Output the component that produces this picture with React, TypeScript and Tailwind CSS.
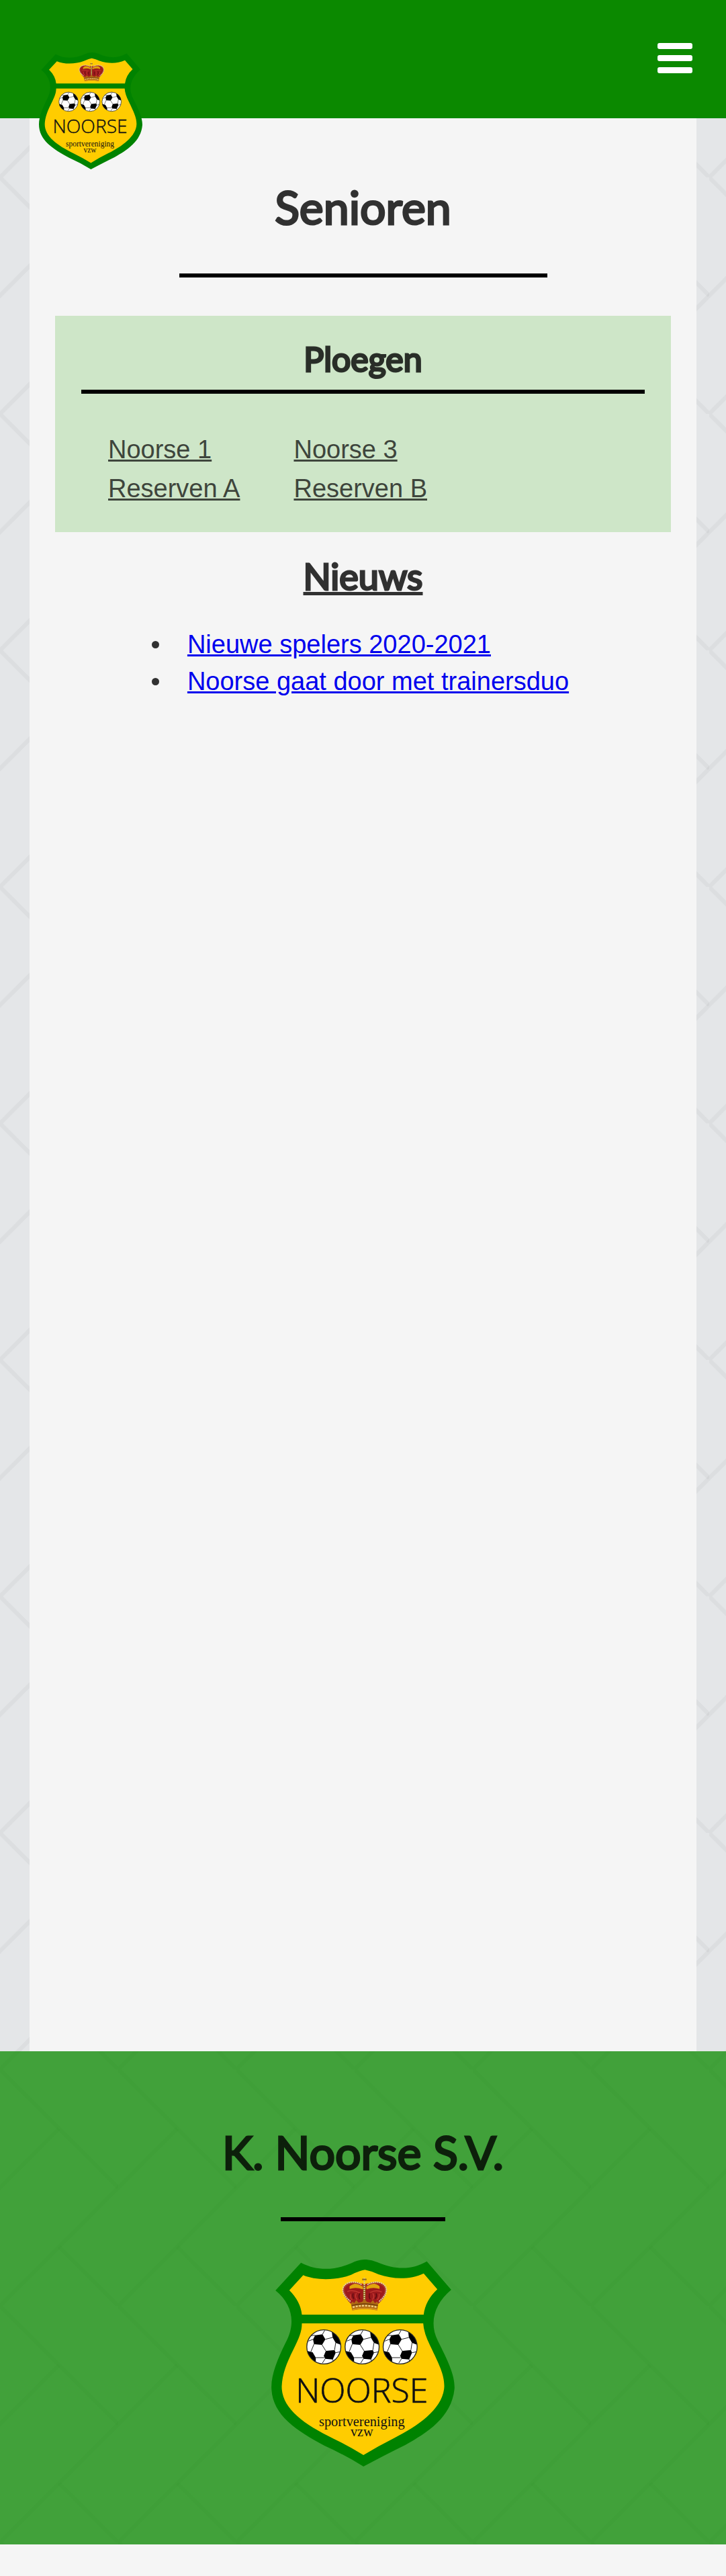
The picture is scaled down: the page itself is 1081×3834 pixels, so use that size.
import React from "react";

const BALLS = [
  [276, 428],
  [447, 428],
  [617, 428],
];

function Ball({ x, y }: { x: number; y: number }) {
  return (
    <g transform={`translate(${x - 86} ${y - 86})`}>
      <circle cx="86" cy="86" r="76" fill="#fff" />
      <g fill="#000">
        <path d="M47 34 L80 30 L93 52 L78 77 L42 74 L38 52Z" />
        <path d="M95 104 L134 100 L139 112 L126 142 L92 139 L86 126Z" />
        <path d="M122 19 A76 76 0 0 1 161 76 L139 68 L125 44Z" />
        <path d="M11 104 L36 110 L50 134 L50 153 A76 76 0 0 1 11 104Z" />
      </g>
      <g fill="none" stroke="#222" strokeWidth="3">
        <path d="M80 30 L90 12 M93 52 L125 44 M78 77 L95 104 M42 74 L28 108 M47 34 L30 36 M139 68 L134 100 M139 112 L158 108 M50 134 L88 134 M92 139 L80 158 M126 142 L128 150 M38 52 L18 60" />
        <circle cx="86" cy="86" r="76" strokeWidth="4" />
      </g>
    </g>
  );
}

function Crown() {
  return (
    <g transform="translate(345 105)">
      <path d="M54 128 C40 112 20 90 20 68 C24 36 74 28 108 66 L114 66 C148 28 198 36 206 66 C206 92 184 112 172 128 L114 134Z" fill="#9d1a1c" />
      <path d="M98 38 L112 44 L128 38 L130 58 L96 58Z" fill="#b3261e" />
      <path d="M46 52 Q76 30 104 50 L104 66 Q76 54 46 64Z M180 52 Q152 30 122 50 L122 66 Q150 54 180 64Z" fill="#e0a50c" />
      <path d="M36 76 Q60 66 92 82 M50 88 Q46 104 58 114 M76 82 Q68 100 80 112 M138 80 Q166 66 190 78 M150 84 Q160 100 148 112 M178 86 Q180 104 168 114" fill="none" stroke="#c63a32" strokeWidth="4" />
      <path d="M62 84 Q58 100 66 108 M92 84 Q84 98 92 110 M136 84 Q130 98 138 110 M164 84 Q170 98 160 108" fill="none" stroke="#5f0c10" strokeWidth="5" />
      <path d="M54 128 C40 112 18 90 20 66 C26 36 74 28 104 50 M172 128 C188 112 208 92 206 66 C200 36 152 28 122 50" fill="none" stroke="#a8352a" strokeWidth="8" />
      <path d="M50 120 C34 106 12 88 16 62 C24 32 70 24 102 46 M178 120 C194 106 214 88 210 62 C202 32 158 24 124 46" fill="none" stroke="#e0cfa8" strokeWidth="6" strokeDasharray="6 3" />
      <path d="M112 44 L112 130" stroke="#8a5a14" strokeWidth="11" />
      <path d="M112 14 L112 128" stroke="#dcc896" strokeWidth="6" strokeDasharray="6 3" />
      <path d="M102 22 L122 22" stroke="#94701f" strokeWidth="7" />
      <path d="M52 132 L60 120 L66 128 L76 114 L86 126 L102 122 L112 110 L124 122 L140 126 L150 114 L160 128 L168 120 L174 132 L170 160 Q112 148 58 160Z" fill="#b06b14" />
      <path d="M56 138 Q112 124 172 138" fill="none" stroke="#6b3a0c" strokeWidth="4" />
      <path d="M60 146 Q112 132 168 146" fill="none" stroke="#f0d488" strokeWidth="7" strokeDasharray="9 5" />
      <path d="M58 157 Q112 145 170 157" fill="none" stroke="#d8961c" strokeWidth="5" />
    </g>
  );
}

function ClubLogo({ className }: { className: string }) {
  return (
    <svg viewBox="42 38 818 924" className={className} role="img" aria-label="K. Noorse S.V.">
      <path
        d="M174 52 C250 92 330 84 400 54 Q457 24 515 50 C600 86 670 84 736 46 L845 173 C770 235 745 320 785 400 C830 490 860 550 860 610 C850 740 740 810 640 866 Q560 905 453 962 Q370 910 280 870 C150 800 42 730 42 606 C42 550 70 480 105 410 C150 330 140 240 60 176Z"
        fill="#008200"
      />
      <path d="M184 108 C240 132 330 132 398 106 Q440 86 460 84 Q490 90 520 104 C590 128 660 128 722 100 L783 171 Q730 220 722 284 L178 284 Q172 225 122 175Z" fill="#fc0" />
      <path d="M178 323 L720 323 Q722 365 752 425 C790 505 814 550 814 603 C812 700 700 780 590 835 Q520 870 453 911 Q390 872 320 838 C180 770 88 700 88 605 C90 550 110 500 140 440 C165 390 178 360 178 323Z" fill="#fc0" />
      <Crown />
      {BALLS.map(([x, y]) => (
        <Ball key={x} x={x} y={y} />
      ))}
      <g fill="#111" textAnchor="middle">
        <text x="446" y="677" fontSize="150" stroke="#111" strokeWidth="2" className="font-['Open_Sans'] font-light">NOORSE</text>
        <text x="446" y="782" fontSize="61" className="font-['Liberation_Serif']">sportvereniging</text>
        <text x="446" y="828" fontSize="61" className="font-['Liberation_Serif']">vzw</text>
      </g>
    </svg>
  );
}

function Backdrop() {
  return (
    <svg className="absolute inset-0 size-full" aria-hidden="true">
      <defs>
        <pattern id="herringbone" width="176" height="352" y="-88" patternUnits="userSpaceOnUse">
          <g fill="none" stroke="#000" strokeOpacity="0.035" strokeWidth="6">
            <path d="M-4 -4 L176 176" />
            <path d="M88 264 L186 362" />
            <path d="M88 88 L-8 184" />
            <path d="M184 168 L-4 356" />
          </g>
        </pattern>
      </defs>
      <rect width="100%" height="100%" fill="url(#herringbone)" />
    </svg>
  );
}

const TEAMS = [
  ["Noorse 1", "Reserven A"],
  ["Noorse 3", "Reserven B"],
];

const NEWS = ["Nieuwe spelers 2020-2021", "Noorse gaat door met trainersduo"];

export default function App() {
  return (
    <div className="min-h-screen bg-[#f5f5f5] font-['Liberation_Sans',sans-serif] text-[38px] text-[#313131]">
      <div className="relative bg-[#e4e6e8]">
        <Backdrop />
        <header className="relative z-10 flex h-44 items-start justify-between bg-[#0b8900] pl-[58px] pr-[50px]">
          <a href="#home" className="mt-[77px]">
            <ClubLogo className="h-44 w-[154px]" />
          </a>
          <button type="button" aria-label="Menu" className="mt-16 flex w-[52px] flex-col gap-[9px]">
            <span className="h-[9px] w-full rounded-[3px] bg-white" />
            <span className="h-[9px] w-full rounded-[3px] bg-white" />
            <span className="h-[9px] w-full rounded-[3px] bg-white" />
          </button>
        </header>

        <main className="relative mx-11 min-h-[2877px] bg-[#f5f5f5] px-[38px] pt-[88px]">
          <h1 className="text-center font-['Lato'] text-[68px] leading-[88px] [-webkit-text-stroke:3px]">Senioren</h1>
          <hr className="mx-auto mt-[55px] w-full max-w-[548px] border-0 border-t-[6px] border-black" />

          <section className="mt-[57px] bg-[#cee6c8] px-[39px] pb-8 pt-8">
            <h2 className="text-center font-['Lato'] text-[50px] leading-[64px] text-[#292e28] [-webkit-text-stroke:3px]">Ploegen</h2>
            <hr className="mt-[14px] border-0 border-t-[6px] border-black" />
            <div className="flex gap-20 px-10 pb-1 pt-[54px] text-[#3e453c]">
              {TEAMS.map((column) => (
                <ul key={column[0]}>
                  {column.map((team) => (
                    <li key={team} className="h-[58px] leading-[58px]">
                      <a href="#team" className="underline">{team}</a>
                    </li>
                  ))}
                </ul>
              ))}
            </div>
          </section>

          <section className="pt-8">
            <h2 className="text-center font-['Lato'] text-[54px] leading-[68px] underline [-webkit-text-stroke:3px]">Nieuws</h2>
            <ul className="mx-auto mt-10 w-fit pr-2">
              {NEWS.map((title) => (
                <li key={title} className="flex items-center gap-[42px] leading-[55px] before:size-[11px] before:rounded-full before:bg-[#313131]">
                  <a href="#news" className="text-[#0000ee] underline">{title}</a>
                </li>
              ))}
            </ul>
          </section>
        </main>

        <footer className="relative flex flex-col items-center bg-[#0b8900]/75 pb-[116px] pt-[106px]">
          <h2 className="font-['Lato'] text-[68px] leading-[88px] text-[#0d200b] [-webkit-text-stroke:3px]">K. Noorse S.V.</h2>
          <hr className="mt-[53px] w-[245px] border-0 border-t-[6px] border-black" />
          <ClubLogo className="mt-[57px] h-[308px] w-[273px]" />
        </footer>
      </div>
    </div>
  );
}
